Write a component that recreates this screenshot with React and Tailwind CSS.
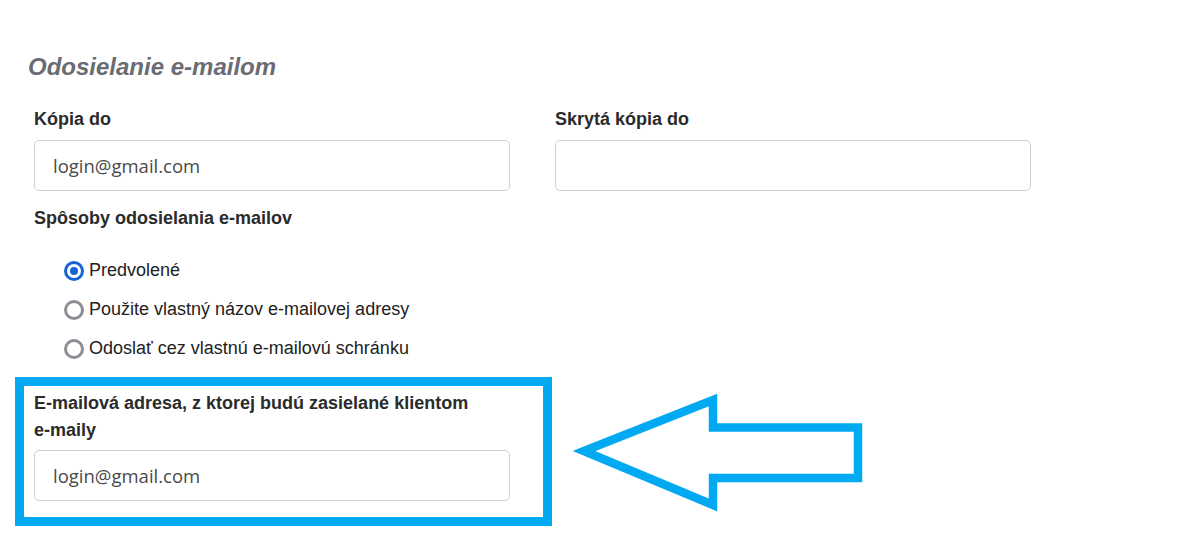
import React from "react";

function Field({ label, value, className = "" }) {
  return (
    <div className={"flex flex-col w-[476px] " + className}>
      <div className="h-[24px] leading-[24px] text-[18px] font-bold text-[#2b2b2b]">{label}</div>
      <div className="mt-[9px] h-[51px] w-[476px] rounded-[5px] border border-[#cfcfcf] bg-white flex items-center pl-[18px] text-[18.5px] text-[#4a4a4a] font-['Open_Sans',sans-serif]">
        {value}
      </div>
    </div>
  );
}

function Radio({ checked, label }) {
  return (
    <div className="h-[39px] flex items-center">
      {checked ? (
        <span className="shrink-0 w-[20px] h-[20px] rounded-full border-[3px] border-[#1762d6] flex items-center justify-center">
          <span className="w-[8px] h-[8px] rounded-full bg-[#1762d6]" />
        </span>
      ) : (
        <span className="shrink-0 w-[20px] h-[20px] rounded-full border-[3px] border-[#8d8d96]" />
      )}
      <span className="ml-[5px] text-[18px] text-[#222222]">{label}</span>
    </div>
  );
}

export default function App() {
  return (
    <div className="w-[1179px] h-[547px] bg-white overflow-hidden font-['Liberation_Sans',Arial,sans-serif]">
      <div className="pl-[28px] pt-[53px] h-[81px] leading-[28px] text-[24px] font-bold italic text-[#6b6b74]">
        Odosielanie e-mailom
      </div>
      <div className="mt-[26px] pl-[34px] flex gap-[45px]">
        <Field label="Kópia do" value="login@gmail.com" />
        <Field label="Skrytá kópia do" value="" />
      </div>
      <div className="mt-[15px] pl-[34px] h-[24px] leading-[24px] text-[18px] font-bold text-[#2b2b2b]">
        Spôsoby odosielania e-mailov
      </div>
      <div className="mt-[21px] pl-[64px] flex flex-col">
        <Radio checked label="Predvolené" />
        <Radio label="Použite vlastný názov e-mailovej adresy" />
        <Radio label="Odoslať cez vlastnú e-mailovú schránku" />
      </div>
      <div className="mt-[9px] pl-[15px] flex items-start">
        <div className="w-[537px] h-[149px] border-[9px] border-[#00a9f1] pl-[10px] pt-[4px]">
          <div className="w-[476px] leading-[27px] text-[18px] font-bold text-[#2b2b2b]">
            E-mailová adresa, z ktorej budú zasielané klientom{" "}
            <span className="whitespace-nowrap">e-maily</span>
          </div>
          <div className="mt-[6px] h-[51px] w-[476px] rounded-[5px] border border-[#cfcfcf] bg-white flex items-center pl-[18px] text-[18.5px] text-[#4a4a4a] font-['Open_Sans',sans-serif]">
            login@gmail.com
          </div>
        </div>
        <svg className="ml-[8px] mt-[3px]" width="310" height="140" viewBox="0 0 310 140">
          <polygon
            points="24,71 153,20 153,47.5 298,47.5 298,98 153,98 153,125"
            fill="none"
            stroke="#00a9f1"
            strokeWidth="8.5"
            strokeLinejoin="miter"
          />
        </svg>
      </div>
    </div>
  );
}
